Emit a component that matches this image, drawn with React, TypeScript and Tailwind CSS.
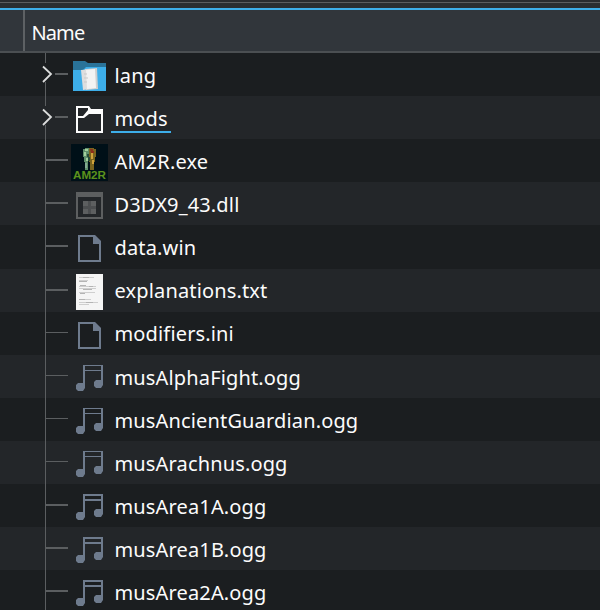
import type { ReactNode } from "react";

type Kind = "folderDocs" | "folder" | "exe" | "dll" | "file" | "text" | "music";

interface Entry {
  name: string;
  kind: Kind;
  expandable?: boolean;
  underlined?: boolean;
  tall?: boolean;
  thin?: boolean;
  raised?: boolean;
}

const entries: Entry[] = [
  { name: "lang", kind: "folderDocs", expandable: true },
  { name: "mods", kind: "folder", expandable: true, underlined: true },
  { name: "AM2R.exe", kind: "exe" },
  { name: "D3DX9_43.dll", kind: "dll" },
  { name: "data.win", kind: "file", tall: true },
  { name: "explanations.txt", kind: "text", raised: true },
  { name: "modifiers.ini", kind: "file", thin: true, raised: true },
  { name: "musAlphaFight.ogg", kind: "music", thin: true },
  { name: "musAncientGuardian.ogg", kind: "music", thin: true },
  { name: "musArachnus.ogg", kind: "music", thin: true },
  { name: "musArea1A.ogg", kind: "music" },
  { name: "musArea1B.ogg", kind: "music" },
  { name: "musArea2A.ogg", kind: "music" },
];

const art: Record<Exclude<Kind, "music">, ReactNode> = {
  folderDocs: (
    <g>
      <path d="M2 8h12l3 2h18v11H2z" fill="#2a7399" />
      <path d="M2 17h10l3-3h20v24H2z" fill="#3daee9" />
      <path d="M14 16l12-1 1 21-12 1z" fill="#cfcfcf" />
      <path d="M10 17l12-1 2 19-12 2z" fill="#dedede" />
      <path d="M15 17l9-1 1 19-9 1z" fill="#f3f3f3" />
      <path d="M13 21h3M13 25h4M13 29h3" stroke="#c9c9c9" />
    </g>
  ),
  folder: (
    <g fill="#fcfcfc">
      <path d="M5 10h13l2 3h12v24H5zM7 12v23h23V18H18l-5 4H7v-2h5l5-6v-2z" fillRule="evenodd" />
    </g>
  ),
  exe: (
    <g>
      <path d="M0 5h37v37H0z" fill="#001018" />
      <path d="M12 10h2V9h4v13h-1v9h-3v-8h-1v-5h-1z" fill="#5f8f6b" />
      <path d="M14 10h3v2h-3zM13 13h2v4h-2zM15 19h2v3h-2z" fill="#a3cf9c" />
      <path d="M14 24h2v5h-2z" fill="#83aa91" />
      <path d="M18 9h5v1h2v8h-1v5h-1v8h-4v-8h-1z" fill="#7a651f" />
      <path d="M19 10h3v2h1v2h-3z" fill="#8c2f1b" />
      <path d="M20 14h2v6h-2zM21 21h2v4h-2z" fill="#d0a33c" />
      <path d="M16 15h2v3h-2zM17 18h2v4h-2z" fill="#284d3a" />
      <text
        x="2"
        y="40"
        textLength="33"
        lengthAdjust="spacingAndGlyphs"
        fill="#5c921c"
        className="font-['Liberation_Sans'] text-[10px] font-bold"
      >
        AM2R
      </text>
    </g>
  ),
  dll: (
    <g fill="#5d5f60">
      <path d="M5 10h27v27H5zM7 15v20h23V15z" fillRule="evenodd" />
      <path d="M12 19h13v13H12z" fill="#4c4e50" />
      <path d="M12 19h5v5h-5zM20 19h5v5h-5zM12 27h5v5h-5zM20 27h5v5h-5z" />
    </g>
  ),
  file: (
    <g>
      <path d="M8 11h15l6 6v19H8z" fill="none" stroke="#6e7b8d" strokeWidth="2" />
      <path d="M22 10h2l6 6v3h-8z" fill="#6e7b8d" />
    </g>
  ),
  text: (
    <g>
      <path d="M5 5h27v36H5z" fill="#f5f5f5" />
      <path
        d="M8 8.500h15M8 11.500h9M8 17.500h17M8 19.500h17M8 23.500h16M8 30.500h12M8 33.500h19M8 35.500h10"
        stroke="#cfcfcf"
      />
      <path
        d="M12 8.500h6M8 12.500h8M9 16.500h6M18 17.500h4M12 20.500h9M9 24.500h5M8 30.500h6M15 33.500h7"
        stroke="#b4b4b4"
      />
    </g>
  ),
};

function Notes({ thin = false }) {
  return (
    <g fill="#6e7b8d">
      <path d="M12 10h2v20h-2zM30 10h2v18h-2z" />
      <path d={thin ? "M12 10h20v1H12zM12 15h20v1H12z" : "M12 10h20v2H12zM12 15h20v2H12z"} />
      <path d="M7 28h7v5l-2 3H7l-2-2v-4zM25 25h7v5l-2 3h-5l-2-2v-4z" />
    </g>
  );
}

function Branch({ expandable = false, tall = false, thin = false }) {
  return (
    <svg width="71" height={tall ? 44 : 43} className="shrink-0" aria-hidden="true">
      <g fill="#5b5e60">
        {expandable ? (
          <>
            <path d="M45 0h1v10h-1zM45 29h1v14h-1z" />
            <path d="M55 20h13v2H55z" />
            <path d="M43 13.500l8 7.500-8 8" fill="none" stroke="#dcdddd" strokeWidth="1.800" />
          </>
        ) : (
          <>
            <path d="M45 0h1v44h-1z" />
            <path d={thin ? "M46 20h22v1H46z" : "M46 20h22v2H46z"} />
          </>
        )}
      </g>
    </svg>
  );
}

function Row({ entry, index }: { entry: Entry; index: number }) {
  return (
    <li
      className={`flex shrink-0 items-start ${entry.tall ? "h-[44px]" : "h-[43px]"} ${
        index % 2 === 0 ? "bg-[#1b1e20]" : "bg-[#232629]"
      }`}
    >
      <Branch expandable={entry.expandable} tall={entry.tall} thin={entry.thin} />
      <svg width="38" height="43" className="shrink-0" aria-hidden="true">
        {entry.kind === "music" ? <Notes thin={entry.thin} /> : art[entry.kind]}
      </svg>
      <span
        className={`ml-[2px] h-[37px] pl-[3.500px] pr-[3px] leading-[29px] tracking-[0.15px] ${
          entry.raised ? "pt-[7px]" : "pt-[8px]"
        } ${entry.underlined ? "border-b-2 border-[#3daee9]" : ""}`}
      >
        {entry.name}
      </span>
    </li>
  );
}

export default function App() {
  return (
    <main className="flex h-[610px] w-[600px] flex-col overflow-hidden bg-[#1b1e20] font-['Noto_Sans',sans-serif] text-[20px] text-[#fcfcfc]">
      <div className="h-[2px] shrink-0 bg-[#292c30]" />
      <div className="h-px shrink-0 bg-[#5b5e61]" />
      <div className="h-[5px] shrink-0 bg-[#2a2e32]" />
      <div className="h-[2px] shrink-0 bg-[#3daee9]" />
      <header className="flex h-[43px] shrink-0 border-b-2 border-[#4b4f52] bg-[#31363b]">
        <div className="w-[25px] border-r-2 border-[#5d6164]" />
        <span className="pl-[6.500px] pt-[8px] leading-[29px] tracking-[-0.9px]">Name</span>
      </header>
      <ul className="flex flex-col">
        {entries.map((entry, index) => (
          <Row key={entry.name} entry={entry} index={index} />
        ))}
      </ul>
    </main>
  );
}
